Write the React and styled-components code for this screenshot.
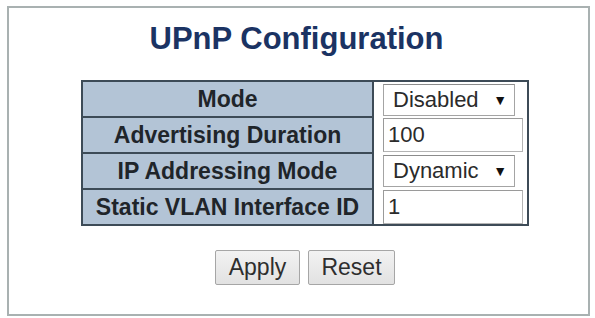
import React from 'react'
import styled, { createGlobalStyle } from 'styled-components'

const GlobalStyle = createGlobalStyle`
    html, body {
        margin: 0;
        padding: 0;
        background: #ffffff;
    }
    body {
        font-family: 'Liberation Sans', Arial, sans-serif;
    }
`

const rows = [
    { label: 'Mode', kind: 'select', value: 'Disabled' },
    { label: 'Advertising Duration', kind: 'text', value: '100' },
    { label: 'IP Addressing Mode', kind: 'select', value: 'Dynamic' },
    { label: 'Static VLAN Interface ID', kind: 'text', value: '1' },
]

const App = () => {
    return (
        <>
            <GlobalStyle />
            <Frame>
                <Title>UPnP Configuration</Title>
                <FormArea>
                    <ConfigTable>
                        <tbody>
                            {rows.map((row, i) => (
                                <tr key={i}>
                                    <LabelCell>{row.label}</LabelCell>
                                    <ValueCell>
                                        {row.kind === 'select' ? (
                                            <SelectBox>
                                                <span>{row.value}</span>
                                                <Arrow>▼</Arrow>
                                            </SelectBox>
                                        ) : (
                                            <TextBox defaultValue={row.value} readOnly />
                                        )}
                                    </ValueCell>
                                </tr>
                            ))}
                        </tbody>
                    </ConfigTable>
                    <ButtonRow>
                        <Button>Apply</Button>
                        <Button wide>Reset</Button>
                    </ButtonRow>
                </FormArea>
            </Frame>
        </>
    )
}

const Frame = styled.div`
    box-sizing: border-box;
    margin: 6px 5px 2px 7px;
    width: 583px;
    height: 310px;
    border: 2px solid #a9b1b1;
    padding-top: 13px;
    display: flex;
    flex-direction: column;
    align-items: center;
`

const Title = styled.h1`
    margin: 0 4px 0 0;
    font-family: 'Liberation Sans', Arial, sans-serif;
    font-size: 31px;
    line-height: 36px;
    font-weight: bold;
    color: #1b3363;
`

const FormArea = styled.div`
    margin-top: 23px;
    padding-left: 13px;
    display: flex;
    flex-direction: column;
    align-items: center;
`

const ConfigTable = styled.table`
    border-collapse: collapse;
    border: 2px solid #3d4b57;
`

const LabelCell = styled.td`
    box-sizing: border-box;
    width: 291px;
    height: 36px;
    padding: 0;
    border: 2px solid #3d4b57;
    background: #b3c4d6;
    color: #1f252a;
    font-family: 'Liberation Sans', Arial, sans-serif;
    font-size: 23px;
    font-weight: bold;
    text-align: center;
    white-space: nowrap;
`

const ValueCell = styled.td`
    box-sizing: border-box;
    width: 155px;
    height: 36px;
    padding: 0 3px 0 9px;
    background: #ffffff;
`

const SelectBox = styled.div`
    box-sizing: border-box;
    width: 132px;
    height: 32px;
    border: 1px solid #a4a4a4;
    border-top-color: #8c8c8c;
    display: flex;
    align-items: center;
    padding: 0 7px 0 9px;
    font-family: 'Liberation Sans', Arial, sans-serif;
    font-size: 22px;
    color: #2b2b2b;
    background: #ffffff;
`

const Arrow = styled.span`
    margin-left: auto;
    font-size: 14px;
    color: #111;
`

const TextBox = styled.input`
    box-sizing: border-box;
    width: 140px;
    height: 34px;
    margin: 0;
    border: 1px solid #b4b4b4;
    border-top-color: #9a9a9a;
    border-left-color: #9a9a9a;
    padding: 0 4px;
    font-family: 'Liberation Sans', Arial, sans-serif;
    font-size: 22px;
    color: #2b2b2b;
    background: #ffffff;
    outline: none;
`

const ButtonRow = styled.div`
    margin-top: 24px;
    display: flex;
    gap: 8px;
`

const Button = styled.button`
    box-sizing: border-box;
    width: ${({ wide }) => (wide ? '87px' : '85px')};
    height: 35px;
    padding: 0;
    border: 1px solid #a6a6a6;
    border-radius: 2px;
    background: linear-gradient(#f2f2f2, #e2e2e2);
    font-family: 'Liberation Sans', Arial, sans-serif;
    font-size: 23px;
    color: #2e2e2e;
`

export default App
